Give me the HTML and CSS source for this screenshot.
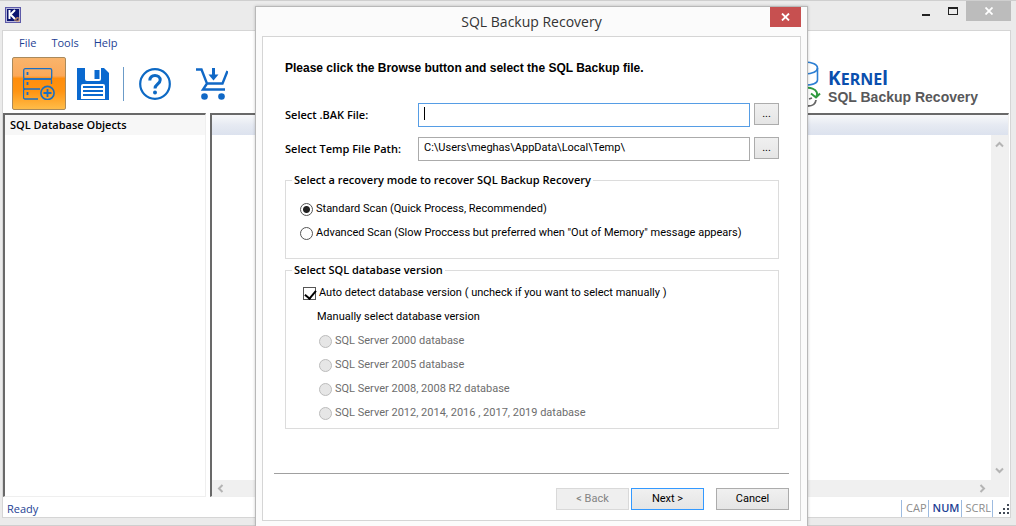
FILE: index.html
```
<!DOCTYPE html>
<html lang="en">
  <head>
    <meta charset="UTF-8" />
    <meta name="viewport" content="width=device-width, initial-scale=1.0" />
    <title>SQL Backup Recovery</title>
    <link rel="stylesheet" href="styles.css">
  </head>
  <body>
    <div class="window">
      <header class="titlebar">
        <svg class="app-icon" width="16" height="16" viewBox="0 0 16 16">
          <rect width="16" height="16" fill="#5d5aa8" />
          <rect x="1" y="1" width="14" height="14" fill="#b9b9dc" />
          <rect x="2" y="2" width="12" height="12" fill="#0b1470" />
          <path d="M4.500 3v9M10 3L5.500 7.500L10 12" fill="none" stroke="#fff" stroke-width="2" />
          <path d="M9 13h2v-2h2v-1M11 14h3v-3" fill="none" stroke="#e0a060" stroke-width="1" />
        </svg>
        <div class="window-controls">
          <button class="control" aria-label="Minimize">
            <svg width="8" height="12" viewBox="0 0 8 12"><path d="M0 9h8v2H0z" fill="#222" /></svg>
          </button>
          <button class="control" aria-label="Maximize">
            <svg width="10" height="8" viewBox="0 0 10 8" shape-rendering="crispEdges"><path d="M0 0h10v8H0zM1 2v5h8V2z" fill="#222" fill-rule="evenodd" /></svg>
          </button>
          <button class="control close" aria-label="Close">
            <svg width="8" height="8" viewBox="0 0 8 8"><path d="M.5 .5l7 7M7.500 .5l-7 7" stroke="#fff" stroke-width="1.800" /></svg>
          </button>
        </div>
      </header>

      <div class="client">
        <nav class="menu">
          <button>File</button>
          <button>Tools</button>
          <button>Help</button>
        </nav>

        <div class="toolbar">
          <button class="tool active" aria-label="Select backup">
            <svg width="32" height="32" viewBox="0 0 32 32" fill="none" stroke="#1a6fc4" stroke-width="1.3">
              <rect x=".7" y=".7" width="28" height="10.300" rx="1.500" />
              <path d="M28.500 16V12.500a1.500 1.500 0 0 0-1.500-1.500H2a1.500 1.500 0 0 0-1.500 1.500v7A1.500 1.500 0 0 0 2 21H17" />
              <path d="M2 21a1.500 1.500 0 0 0-1.500 1.500v7A1.500 1.500 0 0 0 2 31h13" />
              <path d="M4.500 4v3M4.500 14v3M4.500 24v3" stroke-width="1.800" />
              <circle cx="24.500" cy="25" r="6.600" stroke-width="1.600" />
              <path d="M24.500 21v8M20.500 25h8" stroke-width="1.800" />
            </svg>
          </button>
          <button class="tool" aria-label="Save">
            <svg width="32" height="32" viewBox="0 0 32 32">
              <path d="M0 0h27l5 5v27H0z" fill="#0a69cf" />
              <path d="M8 0h16v11a2 2 0 0 1-2 2H10a2 2 0 0 1-2-2z" fill="#fff" />
              <path d="M17.500 2h5v9h-5z" fill="#0a69cf" />
              <path d="M6 16h20a2 2 0 0 1 2 2v13H4V18a2 2 0 0 1 2-2z" fill="#fff" />
              <path d="M6 19h20M6 23h20M6 27h20" stroke="#0a69cf" stroke-width="1.800" />
            </svg>
          </button>
          <span class="separator"></span>
          <button class="tool" aria-label="Help">
            <svg width="32" height="32" viewBox="0 0 32 32" fill="none" stroke="#0d69c4">
              <circle cx="16" cy="16" r="14.800" stroke-width="2.200" />
              <path d="M10.800 12.500C11 8.500 13.200 7.400 16 7.400s5.200 1.600 5.200 4.600c0 4-5.200 4-5.200 8.500" stroke-width="3" />
              <circle cx="16" cy="24.500" r="2" fill="#0d69c4" stroke="none" />
            </svg>
          </button>
          <button class="tool" aria-label="Buy">
            <svg width="32" height="32" viewBox="0 0 32 32" fill="none" stroke="#1068c6" stroke-width="2.400">
              <path d="M0 1.500h5.500L11 15.500L7 21.500h22M31.500 3L26.500 15.500H10" />
              <path d="M17.500 0v8" stroke-width="3" />
              <path d="M12.500 6.500h10l-5 6z" fill="#1068c6" stroke="none" />
              <circle cx="8.500" cy="28.500" r="3.300" fill="#1068c6" stroke="none" />
              <circle cx="25.500" cy="28.500" r="3.300" fill="#1068c6" stroke="none" />
            </svg>
          </button>

          <div class="brand">
            <svg class="brand-logo" width="36" height="48" viewBox="0 0 36 48" fill="none">
              <g stroke="#2d7fd3" stroke-width="1.600">
                <path d="M7.500 8c0-3.500 5-6 12.500-6s12.500 2.500 12.500 6s-5 6-12.500 6s-12.500-2.500-12.500-6z" />
                <path d="M7.500 8v12c0 3 5 5 12.500 5s12.500-2 12.500-5V8" />
              </g>
              <path d="M15 31a9 6 0 0 1 16 6" stroke="#2f9a3f" stroke-width="2" />
              <path d="M26 33.500l5 4l4-4" stroke="#2f9a3f" stroke-width="2" />
              <path d="M31 40c-.5 4-3 6-8 6c-5 0-8-2-9-5M24 39l3-1" stroke="#666" stroke-width="1.800" />
            </svg>
            <div class="brand-text">
              <div class="brand-name">K<span>ERNE</span>l</div>
              <div class="brand-product">SQL Backup Recovery</div>
            </div>
          </div>
        </div>

        <main class="panes">
          <section class="tree">
            <h2>SQL Database Objects</h2>
          </section>
          <section class="preview">
            <div class="preview-header"></div>
            <div class="preview-body">
              <div class="scroll-y">
                <svg width="9" height="7" viewBox="0 0 9 7"><path d="M1 5.500L4.500 2L8 5.500" /></svg>
                <svg width="9" height="7" viewBox="0 0 9 7"><path d="M1 1.500L4.500 5L8 1.500" /></svg>
              </div>
            </div>
            <div class="scroll-x">
              <svg width="7" height="9" viewBox="0 0 7 9"><path d="M5.500 1L2 4.500L5.500 8" /></svg>
              <svg width="7" height="9" viewBox="0 0 7 9"><path d="M1.500 1L5 4.500L1.500 8" /></svg>
            </div>
          </section>
        </main>

        <footer class="statusbar">
          <span>Ready</span>
          <div class="keys">
            <span>CAP</span>
            <span class="on">NUM</span>
            <span>SCRL</span>
            <svg width="17" height="17" viewBox="0 0 17 17" fill="#444c58" shape-rendering="crispEdges">
              <path d="M14 4h2v2h-2zM10 8h2v2h-2zM14 8h2v2h-2zM6 12h2v2H6zM10 12h2v2h-2zM14 12h2v2h-2z" />
            </svg>
          </div>
        </footer>
      </div>
    </div>

    <div class="dialog" role="dialog" aria-labelledby="dialog-title">
      <header class="dialog-title">
        <h1 id="dialog-title">SQL Backup Recovery</h1>
        <button class="dialog-close" aria-label="Close">
          <svg width="9" height="8" viewBox="0 0 9 8"><path d="M1 .5l7 7M8 .5l-7 7" stroke="#fff" stroke-width="1.800" /></svg>
        </button>
      </header>

      <form class="dialog-body">
        <div class="content">
          <p class="intro">Please click the Browse button and select the SQL Backup file.</p>

          <div class="field focused">
            <label for="bak">Select .BAK File:</label>
            <div class="textbox"><input type="text" id="bak" /></div>
            <button type="button">...</button>
          </div>
          <div class="field">
            <label for="temp">Select Temp File Path:</label>
            <div class="textbox"><input type="text" id="temp" value="C:\Users\meghas\AppData\Local\Temp\" /></div>
            <button type="button">...</button>
          </div>

          <fieldset class="modes">
            <legend>Select a recovery mode to recover SQL Backup Recovery</legend>
            <label><input type="radio" name="mode" checked />Standard Scan (Quick Process, Recommended)</label>
            <label><input type="radio" name="mode" />Advanced Scan (Slow Proccess but preferred when "Out of Memory" message appears)</label>
          </fieldset>

          <fieldset class="versions">
            <legend>Select SQL database version</legend>
            <label><input type="checkbox" checked />Auto detect database version ( uncheck if you want to select manually )</label>
            <div class="manual">
              <p>Manually select database version</p>
              <label><input type="radio" name="version" disabled />SQL Server 2000 database</label>
              <label><input type="radio" name="version" disabled />SQL Server 2005 database</label>
              <label><input type="radio" name="version" disabled />SQL Server 2008, 2008 R2 database</label>
              <label><input type="radio" name="version" disabled />SQL Server 2012, 2014, 2016 , 2017, 2019 database</label>
            </div>
          </fieldset>
        </div>

        <div class="actions">
          <button type="button" disabled>&lt; Back</button>
          <button type="button" class="default">Next &gt;</button>
          <button type="button" class="cancel">Cancel</button>
        </div>
      </form>
    </div>
  </body>
</html>
```
FILE: styles.css
```
* {
  margin: 0;
  padding: 0;
  box-sizing: border-box;
}

body {
  font-family: 'Open Sans', 'Noto Sans', sans-serif;
  font-size: 11px;
  line-height: 16px;
  color: #000;
  height: 100vh;
  overflow: hidden;
  position: relative;
}

button,
input {
  font: inherit;
  color: inherit;
}

button {
  border: none;
  background: none;
}

/* Main window */
.window {
  height: 100%;
  display: flex;
  flex-direction: column;
  background-color: #ebebeb;
  border-top: 1px solid #cfcfcf;
  border-bottom: 1px solid #cfcfcf;
  padding: 0 5px 7px 2px;
}

.titlebar {
  height: 29px;
  display: flex;
  justify-content: space-between;
}

.app-icon {
  margin: 6px 3px;
}

.window-controls {
  display: flex;
  height: 20px;

  & .control {
    width: 27px;
    display: flex;
    align-items: center;
    justify-content: center;
  }

  & .close {
    width: 45px;
    background-color: #bcbcbc;
  }
}

.client {
  flex: 1;
  display: flex;
  flex-direction: column;
  background-color: #fff;
  border: 1px solid #d5d5d5;
}

.menu {
  display: flex;
  gap: 15px;
  padding: 4px 16px;

  & button {
    color: #1e3f94;
  }
}

.toolbar {
  height: 58px;
  padding: 2px 9px 3px;
  display: flex;
  align-items: center;
}

.tool {
  width: 54px;
  height: 53px;
  display: flex;
  align-items: center;
  justify-content: center;

  &.active {
    border: 1px solid #a98a5c;
    border-radius: 2px;
    background: linear-gradient(#f9b46c, #fba95a 35%, #ff8d0c 40%, #ff9412 65%, #ffbc48);
  }
}

.separator {
  width: 1px;
  height: 34px;
  margin: 0 4px 0 3px;
  background-color: #6b9bc8;
}

.tool:last-of-type {
  margin-left: 3px;
}

.brand {
  margin-left: auto;
  margin-right: 23px;
  display: flex;
  gap: 7px;
}

.brand-text {
  font-weight: bold;
  padding-top: 8px;
}

.brand-name {
  font-family: 'Noto Sans', 'Open Sans', sans-serif;
  font-size: 19px;
  line-height: 20px;
  color: #0a4fae;

  & span {
    font-size: 16px;
  }
}

.brand-product {
  font-family: 'Liberation Sans', Arial, sans-serif;
  font-size: 14px;
  line-height: 16px;
  color: #58585a;
}

.panes {
  flex: 1;
  display: flex;
  gap: 4px;
  padding-right: 1px;
}

.tree,
.preview {
  border: 1px solid #efefef;
  border-top: 2px solid #696969;
  border-left: 2px solid #696969;
}

.tree {
  width: 203px;

  & h2 {
    font-size: 11px;
    font-weight: 600;
    line-height: 20px;
    padding-left: 5px;
    background-color: #f7f7f7;
  }
}

.preview {
  flex: 1;
  display: flex;
  flex-direction: column;

  & svg {
    fill: none;
    stroke: #b4b4b4;
    stroke-width: 2;
  }
}

.preview-header {
  height: 20px;
  background: linear-gradient(#f7f8fa, #e6eaf2 50%, #dce2ee);
}

.preview-body {
  flex: 1;
  display: flex;
  justify-content: flex-end;
}

.scroll-y,
.scroll-x {
  display: flex;
  align-items: center;
  justify-content: space-between;
  background-color: #f0f0f0;
}

.scroll-y {
  width: 17px;
  flex-direction: column;
  padding: 6px 0;
}

.scroll-x {
  height: 16px;
  padding: 0 22px 0 5px;
}

.statusbar {
  height: 20px;
  display: flex;
  align-items: flex-end;
  justify-content: space-between;
  padding-left: 4px;
  color: #1e3f94;
}

.keys {
  display: flex;

  & span {
    padding: 0 1px 0 4px;
    border-right: 1px solid #9dbbe0;
    color: #8c8c8c;
  }

  & span:first-child {
    border-left: 1px solid #9dbbe0;
  }

  & .on {
    color: #1e3f94;
    font-weight: 600;
  }
}

/* Dialog */
.dialog {
  position: absolute;
  top: 6px;
  bottom: 0;
  left: 255px;
  width: 553px;
  display: flex;
  flex-direction: column;
  font-family: Roboto, Tahoma, sans-serif;
  background-color: #fbfbfb;
  border: 1px solid #b8b8b8;
  border-bottom: none;
  padding: 0 6px 5px;
  box-shadow: 0 0 3px rgba(0, 0, 0, 0.2);
}

.dialog-title {
  height: 29px;
  position: relative;
  text-align: center;

  & h1 {
    font-family: 'Open Sans', sans-serif;
    font-size: 14px;
    font-weight: normal;
    line-height: 29px;
    color: #333;
  }
}

.dialog-close {
  position: absolute;
  top: 0;
  right: 0;
  width: 31px;
  height: 20px;
  background-color: #c75050;
  display: flex;
  align-items: center;
  justify-content: center;
}

.dialog-body {
  flex: 1;
  display: flex;
  flex-direction: column;
  justify-content: space-between;
  background-color: #fff;
  border: 1px solid #d5d5d5;
  padding: 23px 11px 10px;
}

.content {
  padding: 0 10px 0 11px;
}

.intro {
  font-family: 'Liberation Sans', Arial, sans-serif;
  font-size: 12px;
  font-weight: bold;
  margin-bottom: 27px;
}

.field {
  display: flex;
  align-items: flex-start;
  gap: 4px;
  margin-bottom: 10px;

  & label {
    width: 129px;
    font-family: 'Open Sans', sans-serif;
    line-height: 24px;
    font-weight: 600;
  }

  & button {
    width: 25px;
    height: 22px;
  }
}

.textbox {
  flex: 1;
  position: relative;

  & input {
    display: block;
    width: 100%;
    height: 24px;
    padding: 0 5px 4px;
    border: 1px solid #ababab;
    background-color: #fff;
  }
}

.focused {
  & input {
    border-color: #569de5;
  }

  /* text caret */
  & .textbox::after {
    content: '';
    position: absolute;
    top: 4px;
    left: 6px;
    width: 1px;
    height: 13px;
    background-color: #000;
  }
}

.field button,
.actions button {
  border: 1px solid #acacac;
  background: linear-gradient(#f0f0f0, #e5e5e5);
}

fieldset {
  border: 1px solid #dcdcdc;
  padding-left: 14px;

  & legend {
    margin-left: -8px;
    padding: 0 2px;
    font-family: 'Open Sans', sans-serif;
    font-weight: 600;
  }

  & label {
    display: flex;
    align-items: center;
    gap: 3px;
    height: 24px;
  }
}

.modes {
  height: 87px;
  margin: 11px 0 3px;
  padding-top: 9px;
}

.versions {
  height: 167px;
  padding: 3px 0 0 17px;

  & legend {
    margin-left: -11px;
  }
}

.manual {
  padding-left: 16px;

  & p {
    line-height: 24px;
    margin-left: -2px;
  }

  & label {
    color: #6d6d6d;
  }
}

input[type='radio'],
input[type='checkbox'] {
  appearance: none;
  width: 13px;
  height: 13px;
  border: 1px solid #555;
  background-color: #fff;
}

input[type='radio'] {
  border-radius: 50%;

  &:checked {
    background: radial-gradient(circle, #222 3px, #fff 4px);
  }

  &:disabled {
    border-color: #bcbcbc;
    background-color: #e6e6e6;
  }
}

input[type='checkbox']:checked::before {
  content: '';
  display: block;
  width: 5px;
  height: 9px;
  margin-left: 3px;
  border: solid #000;
  border-width: 0 2px 2px 0;
  transform: rotate(40deg);
}

.actions {
  display: flex;
  justify-content: flex-end;
  gap: 2px;
  border-top: 1px solid #a0a0a0;
  padding-top: 14px;

  & button {
    width: 73px;
    height: 22px;
  }

  & .default {
    border-color: #3399ff;
  }

  & .cancel {
    margin-left: 10px;
  }

  & button:disabled {
    color: #838383;
    border-color: #d9d9d9;
    background: #efefef;
  }
}
```
